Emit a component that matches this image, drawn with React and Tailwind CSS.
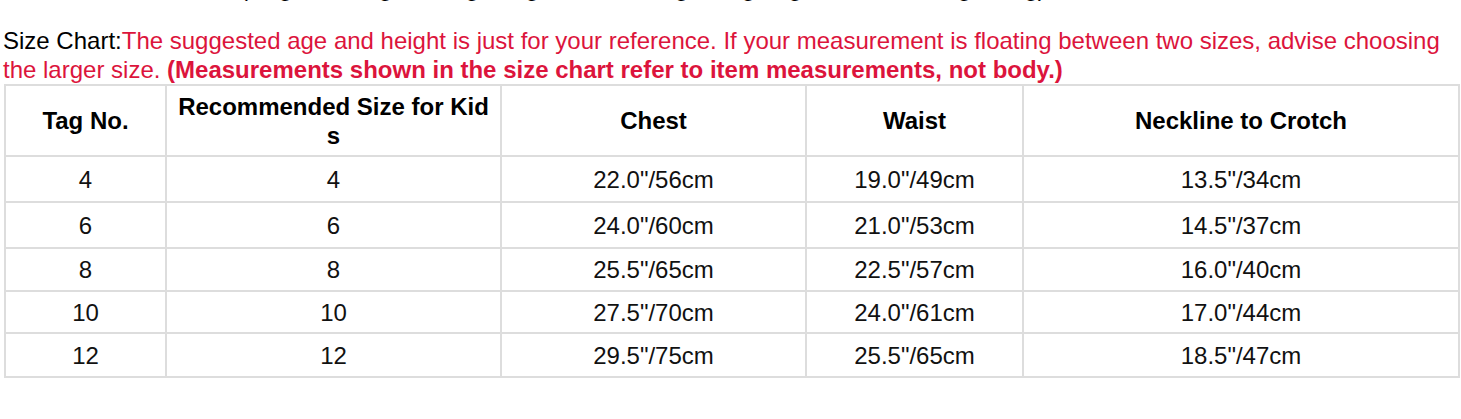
import React from 'react';

const rows = [
  { tag: '4', size: '4', chest: '22.0"/56cm', waist: '19.0"/49cm', neck: '13.5"/34cm', h: 'h-[46px]' },
  { tag: '6', size: '6', chest: '24.0"/60cm', waist: '21.0"/53cm', neck: '14.5"/37cm', h: 'h-[46px]' },
  { tag: '8', size: '8', chest: '25.5"/65cm', waist: '22.5"/57cm', neck: '16.0"/40cm', h: 'h-[43px]' },
  { tag: '10', size: '10', chest: '27.5"/70cm', waist: '24.0"/61cm', neck: '17.0"/44cm', h: 'h-[42px]' },
  { tag: '12', size: '12', chest: '29.5"/75cm', waist: '25.5"/65cm', neck: '18.5"/47cm', h: 'h-[44px]' },
];

const cell = 'border-2 border-[#dddddd] text-center align-middle p-0';

function App() {
  return (
    <div className="w-[1461px] h-[419px] overflow-hidden bg-white px-[3px] text-[24px] leading-[29px] text-[#111] font-['Liberation_Sans',Arial,sans-serif]">
      <div className="-mt-[27px] whitespace-nowrap pl-[237px] text-black">
        (Regular Length, Long Length, Extra Long, Long Leg, Slim Fit, Straight Leg)
      </div>
      <p className="mt-[24px] text-[#dc143c]">
        <span className="text-black">Size Chart:</span>The suggested age and height is just for your reference. If your measurement is floating between two sizes, advise choosing the larger size.{' '}
        <b>(Measurements shown in the size chart refer to item measurements, not body.)</b>
      </p>
      <table className="ml-[1px] w-[1454px] table-fixed border-collapse">
        <colgroup>
          <col className="w-[161px]" />
          <col className="w-[335px]" />
          <col className="w-[305px]" />
          <col className="w-[217px]" />
          <col className="w-[436px]" />
        </colgroup>
        <thead>
          <tr className="h-[71px] font-bold text-black">
            <th className={cell}>Tag No.</th>
            <th className={cell}>Recommended Size for Kid<br />s</th>
            <th className={cell}>Chest</th>
            <th className={cell}>Waist</th>
            <th className={cell}>Neckline to Crotch</th>
          </tr>
        </thead>
        <tbody>
          {rows.map((r) => (
            <tr key={r.tag} className={r.h}>
              <td className={cell}>{r.tag}</td>
              <td className={cell}>{r.size}</td>
              <td className={cell}>{r.chest}</td>
              <td className={cell}>{r.waist}</td>
              <td className={cell}>{r.neck}</td>
            </tr>
          ))}
        </tbody>
      </table>
    </div>
  );
}

export default App;
